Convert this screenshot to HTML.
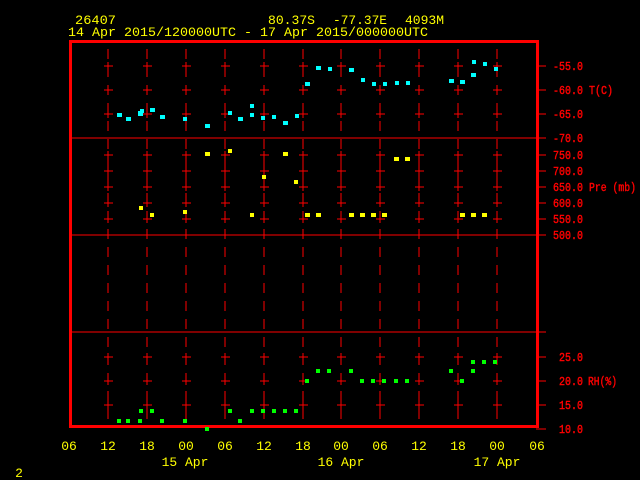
<!DOCTYPE html>
<html><head><style>
html,body{margin:0;padding:0;background:#000;width:640px;height:480px;overflow:hidden}
svg{display:block}
text{font-family:"Liberation Mono",monospace;}
</style></head><body>
<svg width="640" height="480" viewBox="0 0 640 480" shape-rendering="crispEdges">
<g fill="#ffff00" font-size="13">
<text x="75" y="24" textLength="41" lengthAdjust="spacingAndGlyphs">26407</text>
<text x="268" y="24" textLength="47" lengthAdjust="spacingAndGlyphs">80.37S</text>
<text x="333" y="24" textLength="54" lengthAdjust="spacingAndGlyphs">-77.37E</text>
<text x="405" y="24" textLength="39" lengthAdjust="spacingAndGlyphs">4093M</text>
<text x="68" y="36" textLength="360" lengthAdjust="spacingAndGlyphs">14 Apr 2015/120000UTC - 17 Apr 2015/000000UTC</text>
</g>
<g stroke="#ff0000" stroke-width="1" stroke-dasharray="10 8">
<line x1="108" y1="49" x2="108" y2="425"/>
<line x1="147" y1="49" x2="147" y2="425"/>
<line x1="186" y1="49" x2="186" y2="425"/>
<line x1="225" y1="49" x2="225" y2="425"/>
<line x1="264" y1="49" x2="264" y2="425"/>
<line x1="303" y1="49" x2="303" y2="425"/>
<line x1="341" y1="49" x2="341" y2="425"/>
<line x1="380" y1="49" x2="380" y2="425"/>
<line x1="419" y1="49" x2="419" y2="425"/>
<line x1="458" y1="49" x2="458" y2="425"/>
<line x1="497" y1="49" x2="497" y2="425"/>
</g>
<defs>
<path id="c" d="M-4 66h9M-4 90h9M-4 114h9M-4 155h9M-4 171h9M-4 187h9M-4 203h9M-4 219h9M-4 357h9M-4 381h9M-4 405h9M0 62v8M0 86v8M0 110v8M0 151v8M0 167v8M0 183v8M0 199v8M0 215v8M0 353v8M0 377v8M0 401v8" stroke="#ff0000" stroke-width="1"/>
</defs>
<use href="#c" x="108"/><use href="#c" x="147"/><use href="#c" x="186"/><use href="#c" x="225"/><use href="#c" x="264"/><use href="#c" x="303"/><use href="#c" x="341"/><use href="#c" x="380"/><use href="#c" x="419"/><use href="#c" x="458"/><use href="#c" x="497"/>
<g stroke="#ff0000" stroke-width="1">
<path d="M536 66h10M536 90h10M536 114h10M536 138h10M536 155h10M536 171h10M536 187h10M536 203h10M536 219h10M536 235h10M536 357h10M536 381h10M536 405h10M536 429h10"/>
<path d="M70 138h476M70 235h476M70 332h476"/>
</g>
<rect x="70.5" y="41.5" width="467" height="385" fill="none" stroke="#ff0000" stroke-width="3"/>
<g fill="#ff0000" stroke="#ff0000" stroke-width="0.4" font-size="11.5" shape-rendering="auto">
<text x="553" y="70" textLength="30" lengthAdjust="spacingAndGlyphs">-55.0</text>
<text x="553" y="94" textLength="30" lengthAdjust="spacingAndGlyphs">-60.0</text>
<text x="553" y="118" textLength="30" lengthAdjust="spacingAndGlyphs">-65.0</text>
<text x="553" y="142" textLength="30" lengthAdjust="spacingAndGlyphs">-70.0</text>
<text x="553" y="159" textLength="30" lengthAdjust="spacingAndGlyphs">750.0</text>
<text x="553" y="175" textLength="30" lengthAdjust="spacingAndGlyphs">700.0</text>
<text x="553" y="191" textLength="30" lengthAdjust="spacingAndGlyphs">650.0</text>
<text x="553" y="207" textLength="30" lengthAdjust="spacingAndGlyphs">600.0</text>
<text x="553" y="223" textLength="30" lengthAdjust="spacingAndGlyphs">550.0</text>
<text x="553" y="239" textLength="30" lengthAdjust="spacingAndGlyphs">500.0</text>
<text x="559" y="361" textLength="24" lengthAdjust="spacingAndGlyphs">25.0</text>
<text x="559" y="385" textLength="24" lengthAdjust="spacingAndGlyphs">20.0</text>
<text x="559" y="409" textLength="24" lengthAdjust="spacingAndGlyphs">15.0</text>
<text x="559" y="433" textLength="24" lengthAdjust="spacingAndGlyphs">10.0</text>
<text x="589" y="94" textLength="24" lengthAdjust="spacingAndGlyphs">T(C)</text>
<text x="589" y="191" textLength="47" lengthAdjust="spacingAndGlyphs">Pre (mb)</text>
<text x="588" y="385" textLength="29" lengthAdjust="spacingAndGlyphs">RH(%)</text>
</g>
<g fill="#00ffff">
<rect x="117" y="113" width="5" height="4"/><rect x="126" y="117" width="5" height="4"/><rect x="138" y="111" width="5" height="5"/><rect x="140" y="109" width="4" height="4"/><rect x="150" y="108" width="5" height="4"/><rect x="160" y="115" width="5" height="4"/><rect x="183" y="117" width="4" height="4"/><rect x="205" y="124" width="5" height="4"/><rect x="228" y="111" width="4" height="4"/><rect x="238" y="117" width="5" height="4"/><rect x="250" y="104" width="4" height="4"/><rect x="250" y="113" width="4" height="4"/><rect x="261" y="116" width="4" height="4"/><rect x="272" y="115" width="4" height="4"/><rect x="283" y="121" width="5" height="4"/><rect x="295" y="114" width="4" height="4"/><rect x="305" y="82" width="5" height="4"/><rect x="316" y="66" width="5" height="4"/><rect x="328" y="67" width="4" height="4"/><rect x="349" y="68" width="5" height="4"/><rect x="361" y="78" width="4" height="4"/><rect x="372" y="82" width="4" height="4"/><rect x="383" y="82" width="4" height="4"/><rect x="395" y="81" width="4" height="4"/><rect x="406" y="81" width="4" height="4"/><rect x="449" y="79" width="5" height="4"/><rect x="460" y="80" width="5" height="4"/><rect x="472" y="60" width="4" height="4"/><rect x="471" y="73" width="5" height="4"/><rect x="483" y="62" width="4" height="4"/><rect x="494" y="67" width="4" height="4"/>
</g>
<g fill="#ffff00">
<rect x="205" y="152" width="5" height="4"/><rect x="228" y="149" width="4" height="4"/><rect x="283" y="152" width="5" height="4"/><rect x="262" y="175" width="4" height="4"/><rect x="294" y="180" width="4" height="4"/><rect x="139" y="206" width="4" height="4"/><rect x="150" y="213" width="4" height="4"/><rect x="183" y="210" width="4" height="4"/><rect x="250" y="213" width="4" height="4"/><rect x="305" y="213" width="5" height="4"/><rect x="316" y="213" width="5" height="4"/><rect x="349" y="213" width="5" height="4"/><rect x="360" y="213" width="5" height="4"/><rect x="371" y="213" width="5" height="4"/><rect x="382" y="213" width="5" height="4"/><rect x="394" y="157" width="5" height="4"/><rect x="405" y="157" width="5" height="4"/><rect x="460" y="213" width="5" height="4"/><rect x="471" y="213" width="5" height="4"/><rect x="482" y="213" width="5" height="4"/>
</g>
<g fill="#00ff00">
<rect x="117" y="419" width="4" height="4"/><rect x="126" y="419" width="4" height="4"/><rect x="138" y="419" width="4" height="4"/><rect x="139" y="409" width="4" height="4"/><rect x="150" y="409" width="4" height="4"/><rect x="160" y="419" width="4" height="4"/><rect x="183" y="419" width="4" height="4"/><rect x="205" y="427" width="4" height="4"/><rect x="228" y="409" width="4" height="4"/><rect x="238" y="419" width="4" height="4"/><rect x="250" y="409" width="4" height="4"/><rect x="261" y="409" width="4" height="4"/><rect x="272" y="409" width="4" height="4"/><rect x="283" y="409" width="4" height="4"/><rect x="294" y="409" width="4" height="4"/><rect x="305" y="379" width="4" height="4"/><rect x="316" y="369" width="4" height="4"/><rect x="327" y="369" width="4" height="4"/><rect x="349" y="369" width="4" height="4"/><rect x="360" y="379" width="4" height="4"/><rect x="371" y="379" width="4" height="4"/><rect x="382" y="379" width="4" height="4"/><rect x="394" y="379" width="4" height="4"/><rect x="405" y="379" width="4" height="4"/><rect x="449" y="369" width="4" height="4"/><rect x="460" y="379" width="4" height="4"/><rect x="471" y="369" width="4" height="4"/><rect x="471" y="360" width="4" height="4"/><rect x="482" y="360" width="4" height="4"/><rect x="493" y="360" width="4" height="4"/>
</g>
<g fill="#ffff00" font-size="13" text-anchor="middle">
<text x="69" y="450">06</text><text x="108" y="450">12</text><text x="147" y="450">18</text><text x="186" y="450">00</text><text x="225" y="450">06</text><text x="264" y="450">12</text><text x="303" y="450">18</text><text x="341" y="450">00</text><text x="380" y="450">06</text><text x="419" y="450">12</text><text x="458" y="450">18</text><text x="497" y="450">00</text><text x="537" y="450">06</text>
<text x="185" y="466">15 Apr</text><text x="341" y="466">16 Apr</text><text x="497" y="466">17 Apr</text>
<text x="19" y="477">2</text>
</g>
</svg>
</body></html>
